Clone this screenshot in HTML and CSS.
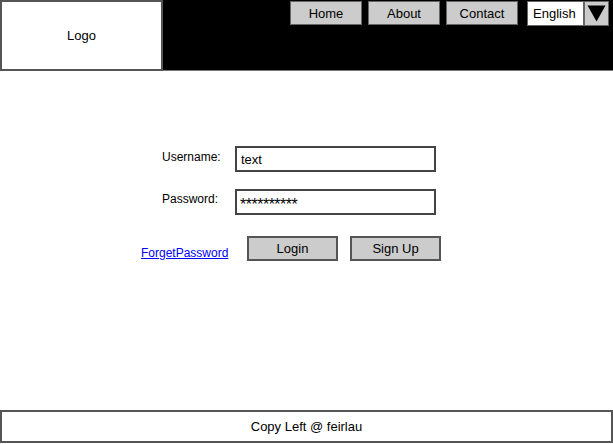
FILE: index.html
```html
<!DOCTYPE html>
<html>
<head>
<meta charset="utf-8">
<link rel="stylesheet" href="styles.css">
</head>
<body>
<div class="page">
  <header class="header">
    <div class="logo">Logo</div>
    <nav class="nav">
      <a class="nav-btn">Home</a>
      <a class="nav-btn">About</a>
      <a class="nav-btn">Contact</a>
      <div class="lang">
        <span class="lang-value">English</span>
        <span class="lang-arrow"><svg width="19" height="17" viewBox="0 0 19 17"><polygon points="0.5,0.5 18.5,0.5 9.5,16.5" fill="#000"/></svg></span>
      </div>
    </nav>
  </header>
  <main class="main">
    <div class="row">
      <label class="label">Username:</label>
      <div class="input">text</div>
    </div>
    <div class="row">
      <label class="label">Password:</label>
      <div class="input pass">**********</div>
    </div>
    <div class="actions">
      <a class="link" href="#">ForgetPassword</a>
      <button class="btn">Login</button>
      <button class="btn">Sign Up</button>
    </div>
  </main>
  <footer class="footer">Copy Left @ feirlau</footer>
</div>
</body>
</html>
```
FILE: styles.css
```css
* { box-sizing: border-box; }
html, body { margin: 0; padding: 0; background: #fff; }
body {
  font-family: "Liberation Sans", Arial, sans-serif;
  font-size: 13px;
  color: #000;
}
.page {
  width: 613px;
  height: 444px;
  display: flex;
  flex-direction: column;
  overflow: hidden;
}
.header {
  height: 71px;
  background: #000;
  display: flex;
  align-items: flex-start;
  border-bottom: 1px solid #777;
}
.logo {
  width: 163px;
  height: 71px;
  background: #fff;
  border: 2px solid #555;
  display: flex;
  align-items: center;
  justify-content: center;
}
.nav {
  display: flex;
  gap: 6px;
  margin-left: 127px;
  margin-top: 1px;
}
.nav-btn {
  width: 72px;
  height: 24px;
  background: #cccccc;
  border: 1px solid #666;
  display: flex;
  align-items: center;
  justify-content: center;
}
.lang {
  display: flex;
  margin-left: 3px;
  height: 25px;
}
.lang-value {
  width: 57px;
  background: #fff;
  border: 1px solid #666;
  display: flex;
  align-items: center;
  padding-left: 5px;
}
.lang-arrow {
  width: 25px;
  background: #cccccc;
  border: 1px solid #666;
  display: flex;
  align-items: center;
  justify-content: center;
}
.main {
  padding-top: 75px;
  display: flex;
  flex-direction: column;
  gap: 17px;
}
.row {
  display: flex;
  align-items: center;
  padding-left: 162px;
}
.label {
  width: 73px;
  margin-top: -4px;
  font-size: 12px;
}
.row + .row .label {
  margin-top: -6px;
}
.input {
  width: 201px;
  height: 26px;
  border: 2px solid #444;
  display: flex;
  align-items: center;
  padding-left: 4px;
}
.pass {
  font-size: 16px;
  letter-spacing: -0.5px;
  padding-top: 5px;
  padding-left: 3px;
}
.actions {
  display: flex;
  align-items: center;
  padding-left: 141px;
  margin-top: 4px;
}
.link {
  color: #0000ff;
  text-decoration: underline;
  width: 106px;
  margin-top: 9px;
  font-size: 12px;
}
.btn {
  width: 91px;
  height: 25px;
  background: #cccccc;
  border: 2px solid #555;
  font: inherit;
  color: #000;
  margin-right: 12px;
  padding: 0;
}
.footer {
  margin-top: auto;
  margin-bottom: 1px;
  height: 33px;
  border: 2px solid #555;
  display: flex;
  align-items: center;
  justify-content: center;
}
```
